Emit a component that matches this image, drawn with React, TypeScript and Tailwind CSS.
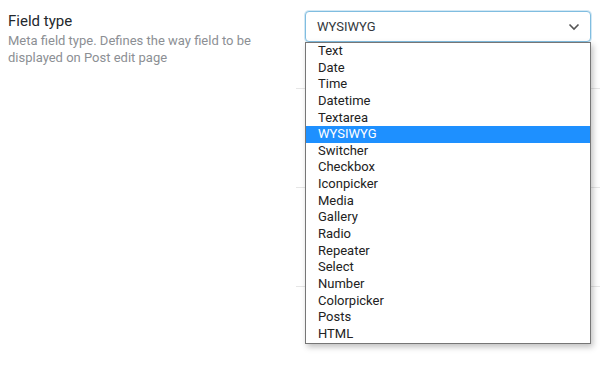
import React from "react";

const options = [
  "Text",
  "Date",
  "Time",
  "Datetime",
  "Textarea",
  "WYSIWYG",
  "Switcher",
  "Checkbox",
  "Iconpicker",
  "Media",
  "Gallery",
  "Radio",
  "Repeater",
  "Select",
  "Number",
  "Colorpicker",
  "Posts",
  "HTML",
];

export default function App() {
  return (
    <div
      className="w-[600px] h-[384px] bg-white overflow-hidden relative"
      style={{ fontFamily: "Roboto, 'Liberation Sans', sans-serif" }}
    >
      <div className="flex">
        <div className="w-[296px] pl-2 pt-[11px]">
          <div className="text-[15px] leading-[20px] text-[#23282d]">Field type</div>
          <div className="text-[13px] leading-[17px] text-[#8c8f94] mt-[1px]">
            Meta field type. Defines the way field to be displayed on Post edit page
          </div>
        </div>
        <div className="flex-1 flex flex-col">
          <div className="h-[89px] border-b border-[#e6e6e6] pl-[9px] pr-[9px] pt-[11px] relative">
            <div className="h-[31px] rounded-[4px] border border-[#80bde0] shadow-[0_0_0_1px_rgba(128,189,224,0.35)] bg-white flex items-center pl-[11px] pr-[9px] text-[13px] text-[#32373c]">
              <span className="flex-1">WYSIWYG</span>
              <svg width="12" height="8" viewBox="0 0 12 8" className="mr-[1px]">
                <path d="M1.5 1.5 L6 6 L10.5 1.5" fill="none" stroke="#555" strokeWidth="1.6" />
              </svg>
            </div>
            <div className="absolute left-[9px] top-[42px] w-[286px] bg-white border border-[#767676] shadow-[2px_3px_6px_rgba(0,0,0,0.25)] z-10">
              {options.map((o) => (
                <div
                  key={o}
                  className={
                    o === "WYSIWYG"
                      ? "h-[16.65px] leading-[16.65px] pl-[12px] text-[13px] bg-[#1e90ff] text-white"
                      : "h-[16.65px] leading-[16.65px] pl-[12px] text-[13px] text-[#222]"
                  }
                >
                  {o}
                </div>
              ))}
            </div>
          </div>
          <div className="h-[99px] border-b border-[#e6e6e6]" />
          <div className="h-[99px] border-b border-[#e6e6e6]" />
        </div>
      </div>
    </div>
  );
}
